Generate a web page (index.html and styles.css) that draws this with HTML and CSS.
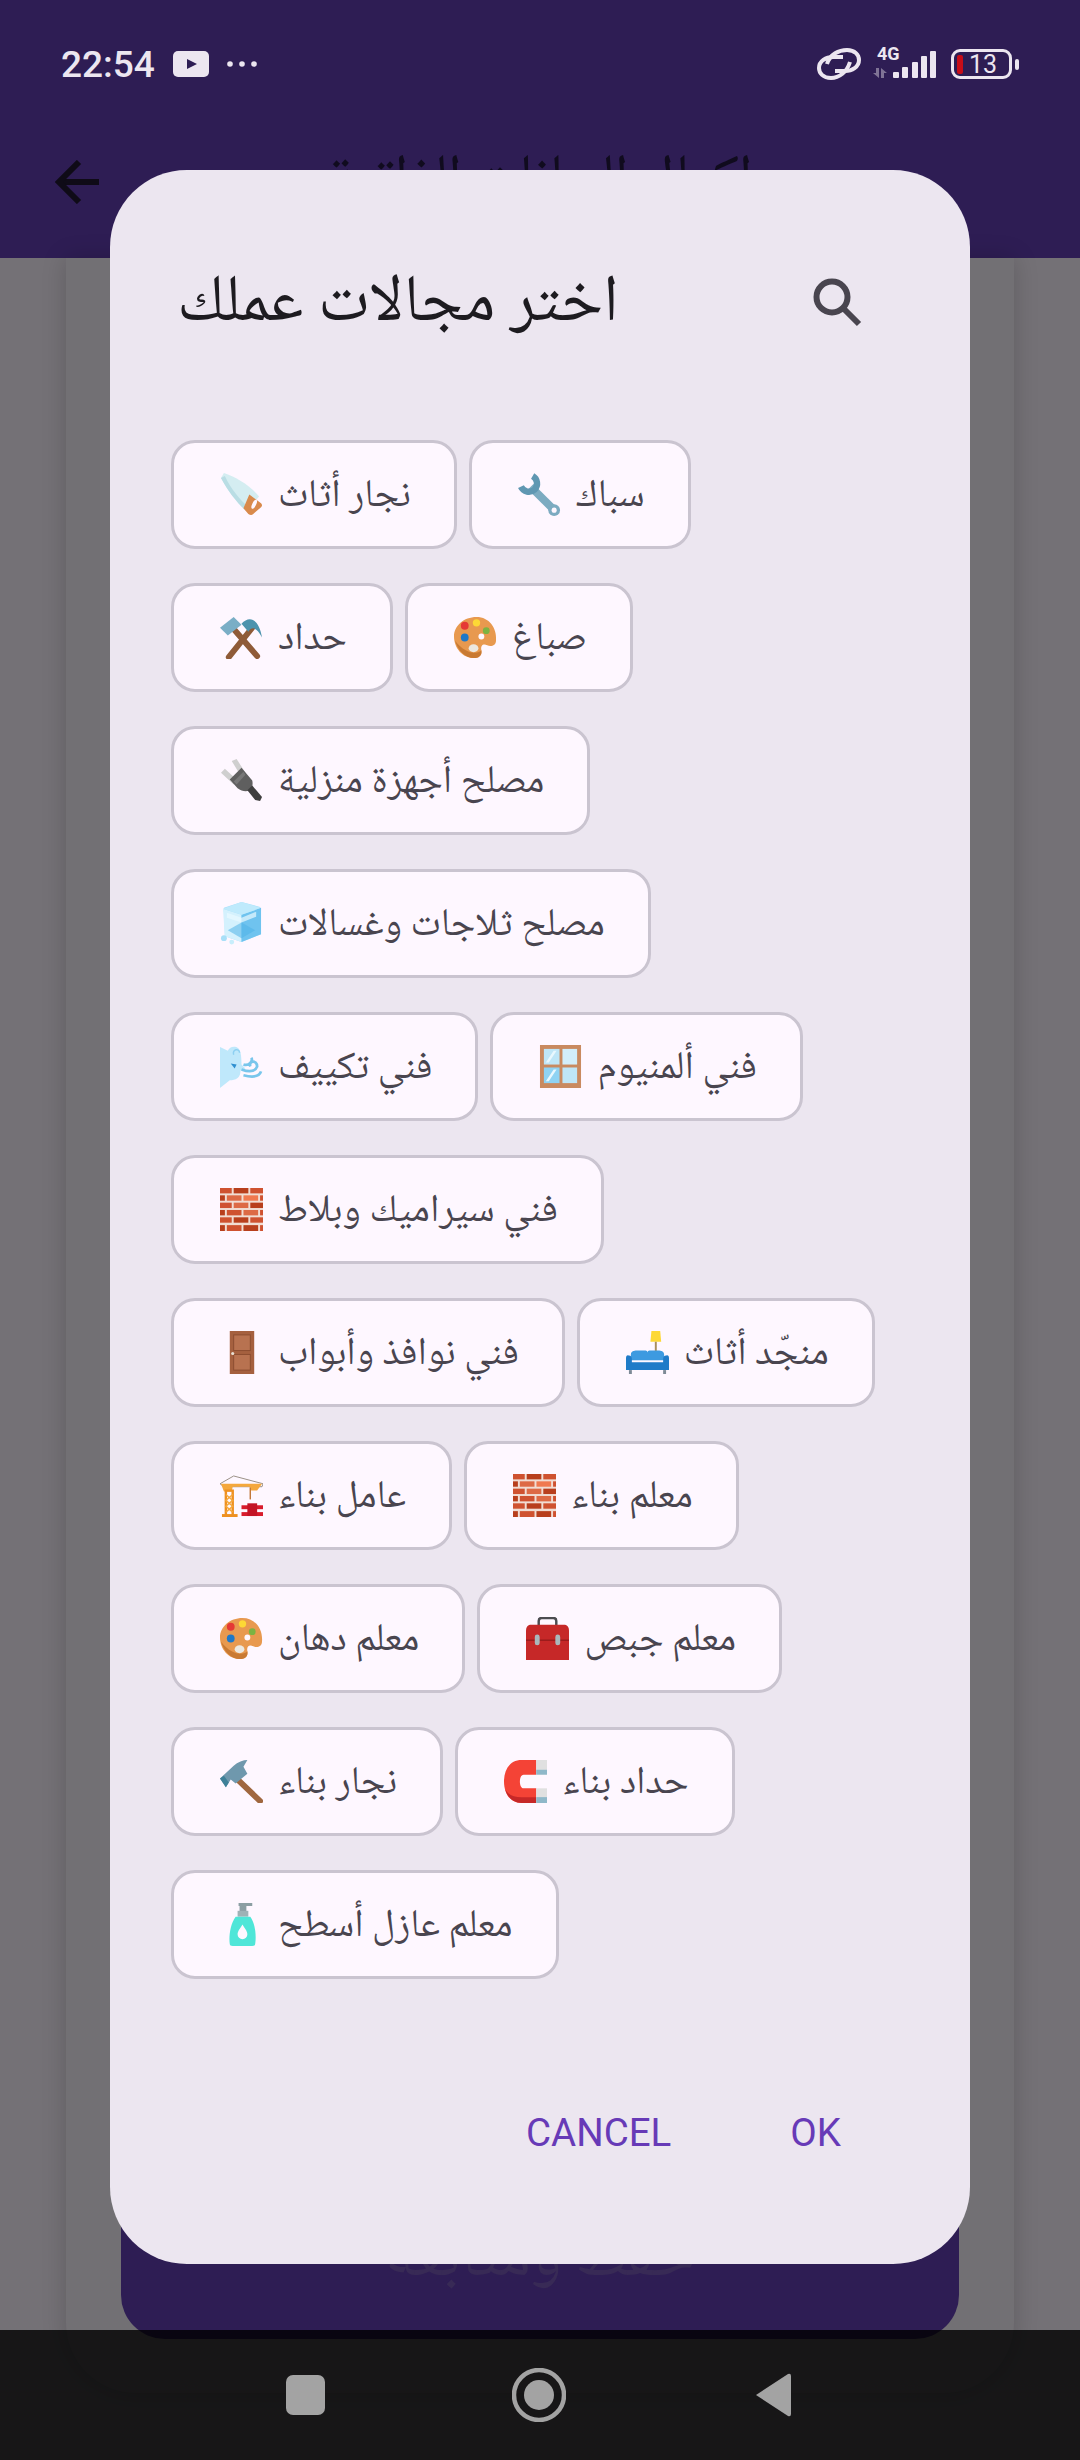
FILE: index.html
```html
<!DOCTYPE html>
<html lang="ar">
<head>
<meta charset="utf-8">
<title>اختر مجالات عملك</title>
<link rel="stylesheet" href="styles.css">
</head>
<body>
<svg class="sprite" aria-hidden="true">
  <symbol id="saw" viewBox="0 0 44 44">
    <path d="M1 5 L4 0 C16 4 30 12 40 24 L27 39 C17 30 8 18 1 5Z" fill="#d4edf1"/>
    <path d="M1 5 C8 18 17 30 27 39 L30 36 C20 27 11 16 5 3Z" fill="#b9dde4"/>
    <path d="M30 22 L42 31 Q44 33 42 35 L34 42 Q32 44 29 42 L24 36Z" fill="#d98a4c"/>
    <ellipse cx="35" cy="32" rx="2" ry="5" transform="rotate(25 35 32)" fill="#fef7ff"/>
  </symbol>
  <symbol id="wrench" viewBox="0 0 44 44">
    <path d="M13 14 L37 38" stroke="#7cabc1" stroke-width="8" fill="none"/>
    <path d="M15 3 A9 9 0 0 1 17 17 A9 9 0 0 1 3 14" stroke="#5f97b2" stroke-width="6.5" fill="none"/>
    <circle cx="37" cy="38" r="6" fill="#7cabc1"/>
    <circle cx="37" cy="38" r="2.6" fill="#fef7ff"/>
  </symbol>
  <symbol id="hammers" viewBox="0 0 44 44">
    <path d="M9 42 L33 12" stroke="#8f5b38" stroke-width="6" stroke-linecap="round"/>
    <path d="M38 41 L12 11" stroke="#8f5b38" stroke-width="6" stroke-linecap="round"/>
    <path d="M0 12 L14 1 L22 9 L8 20Z" fill="#7aaec6"/>
    <path d="M22 8 C30 -1 40 3 43 22 C38 12 33 10 29 16Z" fill="#4c93ad"/>
  </symbol>
  <symbol id="palette" viewBox="0 0 44 44">
    <path d="M23 1 C36 1 44 12 43 25 C43 30 38 32 34 30 C30 28 27 30 28 35 C29 41 25 43 20 43 C9 43 0 33 0 21 C0 10 10 1 23 1Z" fill="#e8994f"/>
    <path d="M1 25 C4 36 12 43 20 43 C25 43 29 41 28 35 C25 39 12 40 1 25Z" fill="#c97a33"/>
    <circle cx="11" cy="10" r="4" fill="#e53935"/>
    <circle cx="23" cy="7" r="3.8" fill="#fdd835"/>
    <circle cx="33" cy="15" r="3.5" fill="#7cb342"/>
    <circle cx="11" cy="22" r="4" fill="#1e78c8"/>
    <ellipse cx="20" cy="33" rx="5" ry="4" fill="#ece8e0"/>
    <circle cx="28" cy="21" r="3" fill="#fef7ff"/>
  </symbol>
  <symbol id="plug" viewBox="0 0 44 44">
    <path d="M12 2 L17 0 L26 14 L21 17Z" fill="#cfcfcf"/>
    <path d="M1 14 L5 10 L18 22 L14 26Z" fill="#cfcfcf"/>
    <path d="M10 21 L22 9 L33 22 C34 26 33 30 30 32 C27 34 22 33 18 30Z" fill="#5f5f5f"/>
    <path d="M28 32 L33 27 L43 39 L41 43 L36 42Z" fill="#3f3f3f"/>
    <path d="M14 23 L24 13 L26 16 L17 26Z" fill="#777"/>
  </symbol>
  <symbol id="cube" viewBox="0 0 44 44">
    <path d="M4 6 L22 0 L41 5 L42 33 L22 41 L5 35Z" fill="#a9e0fa"/>
    <path d="M3 7 L22 13 L22 41 L5 35Z" fill="#d4f1fd"/>
    <path d="M22 13 L42 6 L42 33 L22 41Z" fill="#6fc3ef"/>
    <path d="M3 7 L22 0 L42 6 L22 13Z" fill="#bfeafc"/>
    <path d="M7 11 L22 16 L37 10 L37 15 L22 21 L7 16Z" fill="#eafaff" opacity=".7"/>
    <path d="M8 29 L22 21 L36 29 L22 37Z" fill="#4fb3e8" opacity=".55"/>
    <circle cx="4" cy="37" r="3" fill="#a8dff8"/>
    <circle cx="12" cy="41" r="2.5" fill="#c8eefc"/>
  </symbol>
  <symbol id="wind" viewBox="0 0 44 44">
    <path d="M0 2 L8 6 C10 0 20 0 21 8 C22 13 22 18 22 20 L26 24 L21 26 C21 34 16 36 10 36 L0 44Z" fill="#bfe8fb"/>
    <path d="M14 10 C12 4 20 3 20 8" stroke="#8ed0f2" stroke-width="1.5" fill="none"/>
    <path d="M11 19 L17 20 L15 24Z" fill="#2f8fd0"/>
    <path d="M22 25 C30 28 36 27 38 22 C38 15 29 16 31 22 M24 20 C30 22 34 16 32 13 M24 31 C32 33 40 33 42 27" stroke="#79c6ec" stroke-width="2.8" fill="none"/>
  </symbol>
  <symbol id="window" viewBox="0 0 44 44">
    <rect x="1" y="0" width="42" height="44" fill="#c98a60"/>
    <rect x="5" y="4" width="16" height="16" fill="#bfe6f7"/>
    <rect x="24" y="4" width="15" height="16" fill="#d2eefa"/>
    <rect x="5" y="23" width="16" height="16" fill="#8fd3f3"/>
    <rect x="24" y="23" width="15" height="16" fill="#bfe6f7"/>
    <path d="M7 18 L15 6 L18 6 L10 18Z M7 37 L15 25 L18 25 L10 37Z" fill="#e9f8fe"/>
  </symbol>
  <symbol id="brick" viewBox="0 0 44 44">
    <rect width="44" height="44" fill="#f1ddd3"/>
    <g fill="#cf5230">
      <rect x="0" y="0" width="12" height="5.5"/><rect x="14" y="0" width="15" height="5.5" fill="#b83f1d"/><rect x="31" y="0" width="13" height="5.5"/>
      <rect x="0" y="7.5" width="5" height="5.5" fill="#b83f1d"/><rect x="7" y="7.5" width="15" height="5.5" fill="#dd6a45"/><rect x="24" y="7.5" width="15" height="5.5" fill="#f0794f"/><rect x="41" y="7.5" width="3" height="5.5"/>
      <rect x="0" y="15" width="12" height="5.5"/><rect x="14" y="15" width="15" height="5.5" fill="#dd6a45"/><rect x="31" y="15" width="13" height="5.5" fill="#b83f1d"/>
      <rect x="0" y="22.5" width="5" height="5.5" fill="#b83f1d"/><rect x="7" y="22.5" width="15" height="5.5"/><rect x="24" y="22.5" width="15" height="5.5" fill="#dd6a45"/><rect x="41" y="22.5" width="3" height="5.5"/>
      <rect x="0" y="30" width="12" height="5.5"/><rect x="14" y="30" width="15" height="5.5" fill="#b83f1d"/><rect x="31" y="30" width="13" height="5.5"/>
      <rect x="0" y="38" width="5" height="6" fill="#b83f1d"/><rect x="7" y="38" width="15" height="6"/><rect x="24" y="38" width="15" height="6" fill="#b83f1d"/><rect x="41" y="38" width="3" height="6"/>
    </g>
  </symbol>
  <symbol id="door" viewBox="0 0 44 44">
    <rect x="10" y="0" width="25" height="44" fill="#a5603f"/>
    <rect x="14" y="4" width="17" height="16" fill="#b87250" stroke="#8c4d30" stroke-width="1"/>
    <rect x="14" y="24" width="17" height="16" fill="#b87250" stroke="#8c4d30" stroke-width="1"/>
    <circle cx="13" cy="23" r="1.6" fill="#e8e0d4"/>
  </symbol>
  <symbol id="couch" viewBox="0 0 44 44">
    <path d="M26 0 L35 0 L36 11 L25 11Z" fill="#fdd835"/>
    <rect x="29.5" y="11" width="2" height="12" fill="#a98e5c"/>
    <path d="M5 24 C5 21 8 20 11 20 L20 20 C21 20 22 21 22 22 C22 21 23 20 24 20 L33 20 C36 20 39 21 39 24 L39 30 L5 30Z" fill="#3d9ae0"/>
    <path d="M0 28 Q0 24 3 25 Q6 25 6 29 L6 32 L38 32 L38 29 Q38 25 41 25 Q44 24 44 28 L44 40 L0 40Z" fill="#1f7bc8"/>
    <rect x="3" y="40" width="3" height="4" fill="#7d8a96"/><rect x="38" y="40" width="3" height="4" fill="#7d8a96"/>
  </symbol>
  <symbol id="crane" viewBox="0 0 44 44">
    <path d="M0 10 L14 2 L44 10 L43 13 L4 13Z" fill="none" stroke="#9a8f85" stroke-width="1"/>
    <path d="M1 10 H43 L38 17 H32 L30 13 H13 L12 18 H4Z" fill="#f5a83c"/>
    <path d="M6 44 V17 H13 V44" fill="none" stroke="#ee9020" stroke-width="2.5"/>
    <path d="M6 21 L13 27 L6 33 L13 39 M13 21 L6 27 L13 33 L6 39" stroke="#f5a83c" stroke-width="1.5" fill="none"/>
    <rect x="2" y="41" width="16" height="3" fill="#ee9020"/>
    <path d="M31 14 V26" stroke="#c2783a" stroke-width="1.5"/>
    <rect x="22" y="32" width="22" height="4" fill="#d81b2c"/><rect x="22" y="39" width="22" height="4" fill="#d81b2c"/><rect x="28" y="30" width="10" height="13" fill="#c41426"/>
  </symbol>
  <symbol id="toolbox" viewBox="0 0 44 44">
    <path d="M13 9 V4 Q13 1 16 1 H28 Q31 1 31 4 V9" fill="none" stroke="#4c4c50" stroke-width="2.5"/>
    <path d="M4 8 H40 Q44 9 44 14 V44 H0 V14 Q0 9 4 8Z" fill="#c62828"/>
    <rect x="0" y="23" width="44" height="1.5" fill="#9a1c1c"/>
    <rect x="9" y="18" width="5" height="11" rx="2.5" fill="#a9b8bc"/><rect x="30" y="18" width="5" height="11" rx="2.5" fill="#a9b8bc"/>
  </symbol>
  <symbol id="hammer" viewBox="0 0 44 44">
    <path d="M16 18 L41 42" stroke="#a0673f" stroke-width="6" stroke-linecap="round"/>
    <path d="M0 19 L14 6 C18 2 24 0 28 0 L24 7 L28 14 L16 24 L11 20 L6 28 Z" fill="#6f98ad"/>
    <path d="M0 19 L4 16 L9 23 L6 28Z" fill="#3e8098"/>
  </symbol>
  <symbol id="magnet" viewBox="0 0 44 44">
    <path d="M33 0 H18 C6 0 0 10 0 22 C0 34 6 44 18 44 H33 V29 H20 C15 29 15 15 20 15 H33Z" fill="#f44336"/>
    <path d="M1 30 C4 39 10 44 18 44 H33 V38 H18 C10 38 5 36 1 30Z" fill="#c62828"/>
    <rect x="33" y="0" width="11" height="15" fill="#e0e0e0"/><rect x="33" y="29" width="11" height="15" fill="#e0e0e0"/>
    <rect x="33" y="10" width="11" height="5" fill="#8fb8c9"/><rect x="33" y="38" width="11" height="6" fill="#8fb8c9"/>
  </symbol>
  <symbol id="lotion" viewBox="0 0 44 44">
    <path d="M19 0 H33 V3 H27 V9 H20 V3 H19Z" fill="#8c9ea3"/>
    <rect x="18" y="8" width="11" height="6" fill="#9fb2b6"/>
    <path d="M16 14 H31 C37 22 37 36 36 42 Q36 44 33 44 H13 Q10 44 10 42 C9 36 10 22 16 14Z" fill="#4fe6d8"/>
    <path d="M23 22 C26 27 28 29 28 32 A5 5 0 0 1 18 32 C18 29 20 27 23 22Z" fill="#fef7ff"/>
  </symbol>
</svg>

<div class="screen">
  <header class="top">
    <div class="status">
      <div class="status-group">
        <span class="time">22:54</span>
        <svg class="yt" viewBox="0 0 36 26"><rect width="36" height="26" rx="5" fill="#ece6f0"/><path d="M14 8 L24 13 L14 18Z" fill="#2e1d54"/></svg>
        <svg class="dots" viewBox="0 0 32 8"><circle cx="4" cy="4" r="2.8"/><circle cx="16" cy="4" r="2.8"/><circle cx="28" cy="4" r="2.8"/></svg>
      </div>
      <div class="status-group">
        <svg class="link" viewBox="0 0 44 34" fill="none" stroke="#ece6f0" stroke-width="4"><path d="M10 17 C13 7 22 3 30 3 C38 3 42 8 42 13 C42 20 35 24 28 24 H18"/><path d="M33 15 C30 25 22 31 14 31 C6 31 2 26 2 21 C2 14 9 10 16 10 H26"/></svg>
        <div class="net">
          <span class="fourg">4G</span>
          <svg class="bars" viewBox="0 0 64 30"><path fill="#7f7395" d="M3 19 H6 V29 L0 24 H3Z M8 29 H11 V24 H14 L8 19Z"/><g fill="#ece6f0"><rect x="20" y="23" width="6" height="6" rx="1"/><rect x="29" y="18" width="6" height="11" rx="1"/><rect x="39" y="13" width="6" height="16" rx="1"/><rect x="48" y="7" width="6" height="22" rx="1"/><rect x="57" y="2" width="6" height="27" rx="1"/></g></svg>
        </div>
        <div class="battery"><span class="level"></span><span class="pct">13</span></div>
        <span class="nub"></span>
      </div>
    </div>
    <div class="appbar">
      <svg class="back" viewBox="0 0 44 44" fill="none" stroke="#0f0b17" stroke-width="6"><path d="M44 22 H4"/><path d="M24 2 L4 22 L24 42"/></svg>
      <h1 class="app-title">إكمال البيانات الذاتية</h1>
    </div>
  </header>

  <main class="body">
    <section class="card">
      <div class="save">حفظ ومتابعة</div>
    </section>
  </main>

  <nav class="navbar">
    <span class="nav-square"></span>
    <svg class="nav-home" viewBox="0 0 54 54"><circle cx="27" cy="27" r="25" fill="none" stroke="#a3a3a3" stroke-width="4.5"/><circle cx="27" cy="27" r="15" fill="#a3a3a3"/></svg>
    <svg class="nav-back" viewBox="0 0 38 46"><path d="M2 23 L34 2 Q37 1 37 4 V42 Q37 45 34 44Z" fill="#a3a3a3"/></svg>
  </nav>

  <section class="dialog">
    <div class="dialog-head">
      <h2 class="dialog-title">اختر مجالات عملك</h2>
      <svg class="search" viewBox="0 0 50 50" fill="none" stroke="#49454f" stroke-width="6"><circle cx="19" cy="19" r="15.5"/><path d="M30 30 L46 46"/></svg>
    </div>
    <div class="chips">
      <button class="chip"><svg class="emoji"><use href="#saw"/></svg><span>نجار أثاث</span></button>
      <button class="chip"><svg class="emoji"><use href="#wrench"/></svg><span>سباك</span></button>
      <button class="chip"><svg class="emoji"><use href="#hammers"/></svg><span>حداد</span></button>
      <button class="chip"><svg class="emoji"><use href="#palette"/></svg><span>صباغ</span></button>
      <button class="chip"><svg class="emoji"><use href="#plug"/></svg><span>مصلح أجهزة منزلية</span></button>
      <button class="chip"><svg class="emoji"><use href="#cube"/></svg><span>مصلح ثلاجات وغسالات</span></button>
      <button class="chip"><svg class="emoji"><use href="#wind"/></svg><span>فني تكييف</span></button>
      <button class="chip"><svg class="emoji"><use href="#window"/></svg><span>فني ألمنيوم</span></button>
      <button class="chip"><svg class="emoji"><use href="#brick"/></svg><span>فني سيراميك وبلاط</span></button>
      <button class="chip"><svg class="emoji"><use href="#door"/></svg><span>فني نوافذ وأبواب</span></button>
      <button class="chip"><svg class="emoji"><use href="#couch"/></svg><span>منجّد أثاث</span></button>
      <button class="chip"><svg class="emoji"><use href="#crane"/></svg><span>عامل بناء</span></button>
      <button class="chip"><svg class="emoji"><use href="#brick"/></svg><span>معلم بناء</span></button>
      <button class="chip"><svg class="emoji"><use href="#palette"/></svg><span>معلم دهان</span></button>
      <button class="chip"><svg class="emoji"><use href="#toolbox"/></svg><span>معلم جبص</span></button>
      <button class="chip"><svg class="emoji"><use href="#hammer"/></svg><span>نجار بناء</span></button>
      <button class="chip"><svg class="emoji"><use href="#magnet"/></svg><span>حداد بناء</span></button>
      <button class="chip"><svg class="emoji"><use href="#lotion"/></svg><span>معلم عازل أسطح</span></button>
    </div>
    <div class="actions">
      <button class="action">CANCEL</button>
      <button class="action">OK</button>
    </div>
  </section>
</div>
</body>
</html>
```

FILE: styles.css
```css
* { box-sizing: border-box; }
html, body { margin: 0; padding: 0; }
body { width: 1080px; height: 2460px; overflow: hidden; background: #747176; font-family: Roboto, "Noto Sans", "DejaVu Sans", sans-serif; }
.sprite { display: none; }
.screen { position: relative; width: 1080px; height: 2460px; overflow: hidden; display: flex; flex-direction: column; }

.top { height: 258px; background: #2e1d54; flex: none; }
.status { display: flex; justify-content: space-between; align-items: center; height: 64px; margin-top: 32px; padding: 0 61px; }
.status-group { display: flex; align-items: center; }
.time { font-size: 37px; font-weight: 500; color: #ece6f0; line-height: 1; }
.yt { width: 36px; height: 26px; margin-left: 18px; }
.dots { width: 32px; height: 8px; margin-left: 17px; fill: #ece6f0; }
.link { width: 44px; height: 34px; margin-right: 12px; }
.net { position: relative; width: 64px; height: 32px; margin-right: 14px; }
.fourg { position: absolute; left: 4px; top: -3px; font-size: 18px; font-weight: 700; color: #ece6f0; line-height: 1; }
.bars { width: 64px; height: 30px; position: absolute; left: 0; top: 1px; }
.battery { width: 61px; height: 30px; border: 3px solid #ece6f0; border-radius: 9px; display: flex; align-items: center; gap: 6px; padding-left: 3px; }
.level { width: 6px; height: 19px; background: #c80d18; border-radius: 2px; }
.pct { font-size: 25px; color: #ece6f0; line-height: 1; }
.nub { width: 4px; height: 11px; background: #ece6f0; border-radius: 2px; margin-left: 3px; }

.appbar { position: relative; height: 100px; margin-top: 30px; padding-left: 55px; display: flex; align-items: center; }
.back { width: 44px; height: 44px; margin-top: 12px; }
.app-title { position: absolute; left: 0; right: 0; top: 6px; margin: 0; text-align: center; direction: rtl; font-size: 58px; font-weight: 400; color: #100b1e; line-height: 100px; font-family: "Noto Naskh Arabic", "DejaVu Sans", sans-serif; }

.body { flex: 1; padding: 0 66px; }
.card { height: 2135px; background: #727074; border-radius: 0 0 70px 70px; box-shadow: 0 0 24px rgba(0, 0, 0, .18); display: flex; flex-direction: column; justify-content: flex-end; padding: 0 55px 54px; }
.save { height: 140px; background: #2e1d54; border-radius: 0 0 44px 44px; text-align: center; direction: rtl; font-size: 66px; line-height: 124px; color: #382a56; font-family: "Noto Naskh Arabic", "DejaVu Sans", sans-serif; }

.navbar { position: absolute; left: 0; right: 0; bottom: 0; height: 130px; background: rgba(0, 0, 0, .8); }
.nav-square { position: absolute; left: 286px; top: 45px; width: 39px; height: 40px; background: #a3a3a3; border-radius: 7px; }
.nav-home { position: absolute; left: 512px; top: 38px; width: 54px; height: 54px; }
.nav-back { position: absolute; left: 754px; top: 42px; width: 38px; height: 46px; }

.dialog { position: absolute; left: 110px; top: 170px; width: 860px; height: 2094px; background: #ece6f0; border-radius: 77px; display: flex; flex-direction: column; padding: 0 61px; }
.dialog-head { display: flex; justify-content: space-between; align-items: center; height: 270px; padding: 0 46px 20px 6px; flex: none; }
.dialog-title { margin: 22px 0 0; direction: rtl; font-size: 66.5px; font-weight: 400; color: #1d1b20; line-height: 90px; font-family: "Noto Naskh Arabic", "DejaVu Sans", sans-serif; }
.search { width: 50px; height: 50px; margin-top: 16px; }

.chips { display: flex; flex-wrap: wrap; gap: 34px 12px; align-content: flex-start; flex: 1; }
.chip { display: inline-flex; align-items: center; gap: 15px; height: 109px; padding: 0 43px 0 46px; background: #fef7ff; border: 3px solid #cac4d0; border-radius: 24px; font-size: 39px; color: #49454f; white-space: nowrap; font-family: "Noto Naskh Arabic", "DejaVu Sans", sans-serif; }
.chip span { direction: rtl; padding-top: 6px; }
.emoji { width: 43px; height: 43px; flex: none; }

.actions { display: flex; justify-content: flex-end; gap: 119px; height: 216px; padding: 0 68px 0 0; flex: none; }
.action { background: none; border: 0; padding: 0; height: 56px; margin-top: 57px; font-family: Roboto, sans-serif; font-size: 38.5px; color: #673ab7; line-height: 56px; }
```
